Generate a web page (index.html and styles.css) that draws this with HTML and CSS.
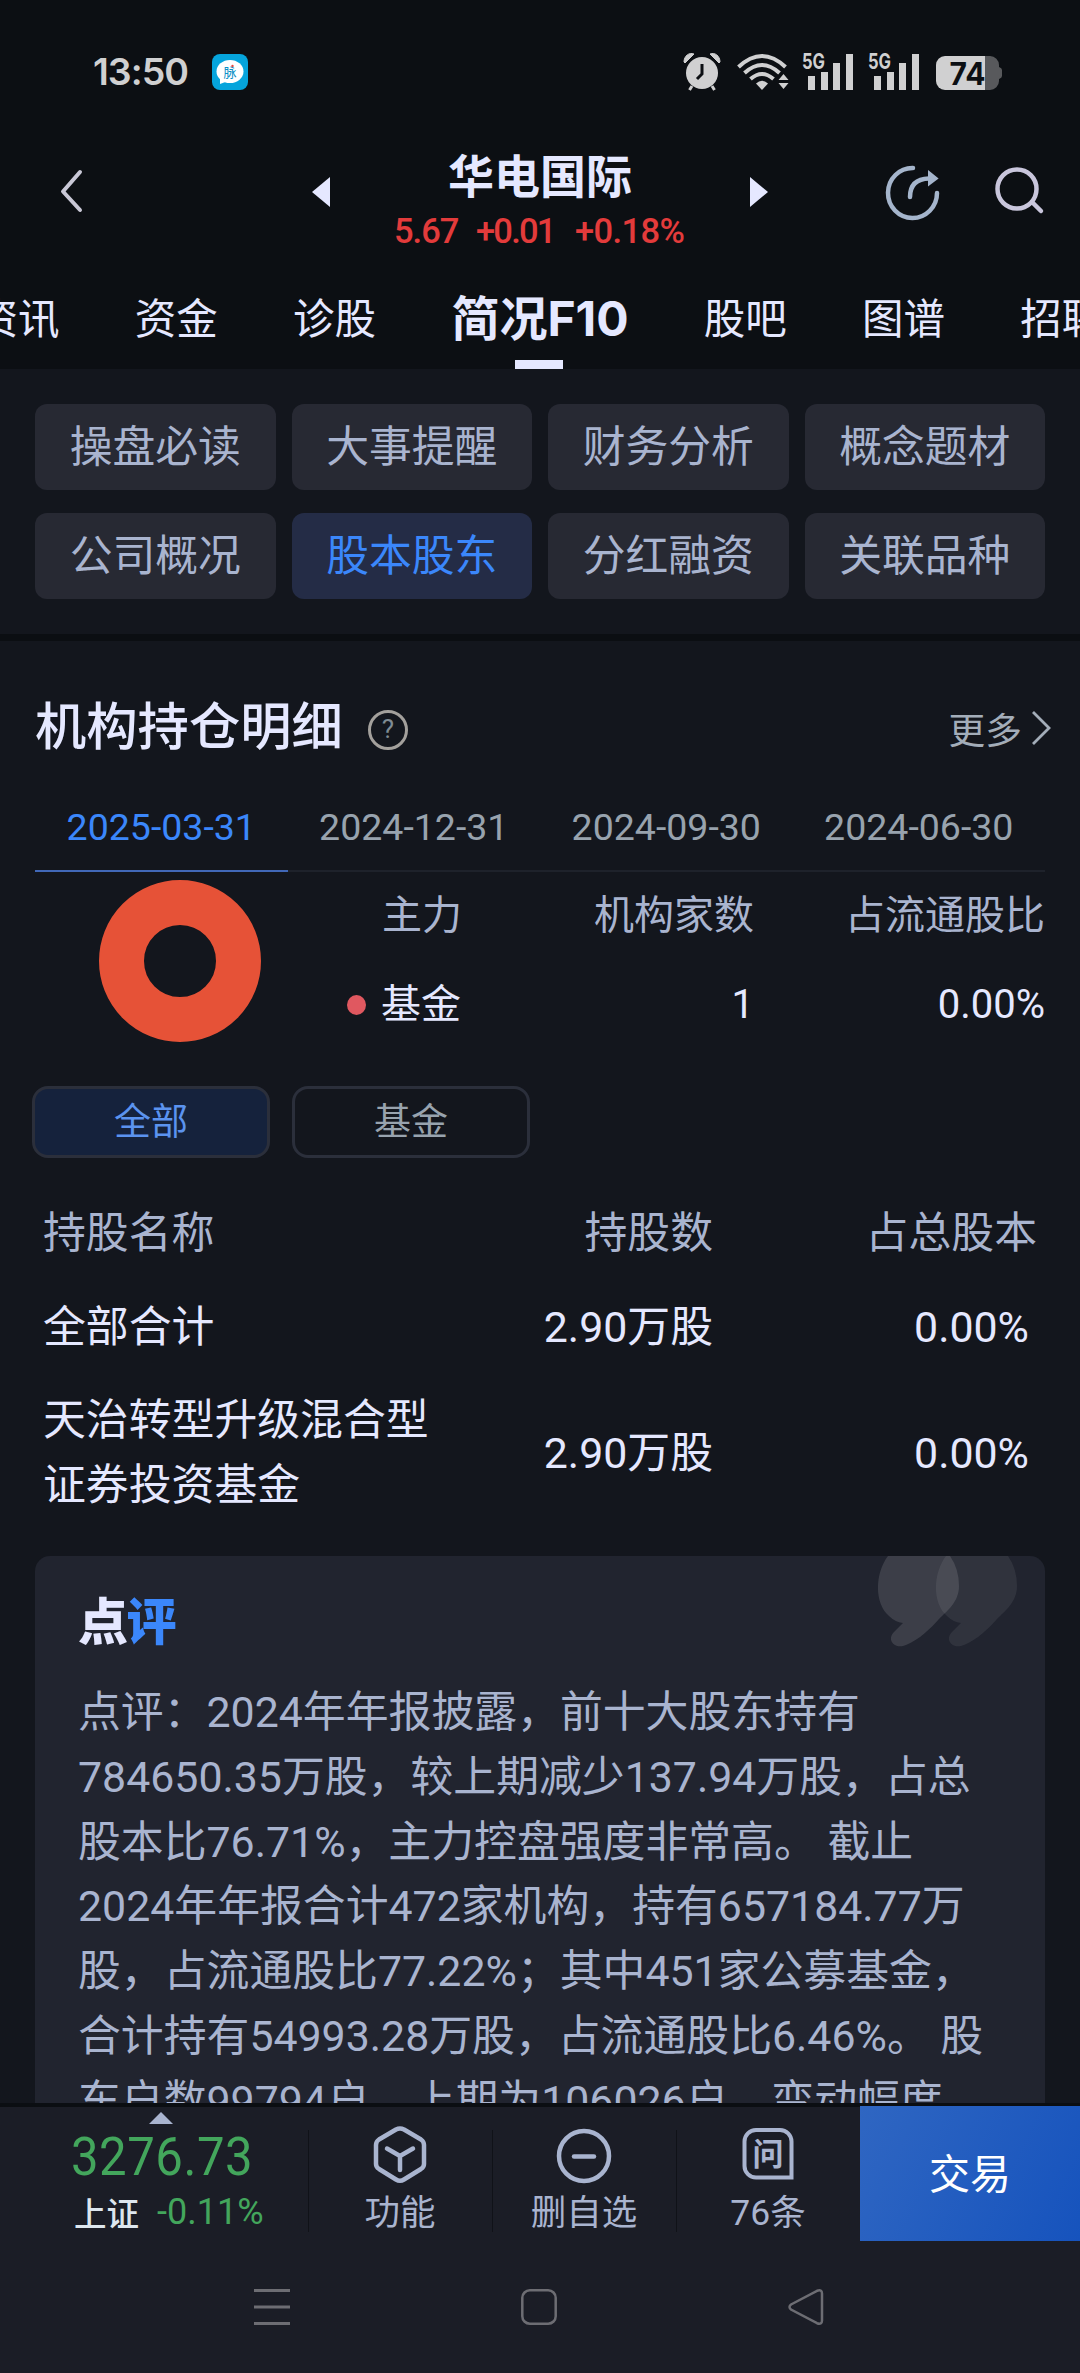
FILE: index.html
```html
<!DOCTYPE html>
<html lang="zh-CN">
<head>
<meta charset="utf-8">
<title>华电国际 - 简况F10</title>
<link rel="stylesheet" href="styles.css">
</head>
<body>
<header class="top">
  <div class="status">
    <span class="time">13:50</span>
    <svg class="app" width="36" height="36" viewBox="0 0 36 36"><rect width="36" height="36" rx="8" fill="#05a4dc"/><ellipse cx="18" cy="17.500" rx="13.500" ry="11.500" fill="#fff"/><path d="M8 24v6l8-3z" fill="#fff"/><text x="11.500" y="22.500" font-size="13" fill="#0a8fc6" class="cjk">脉</text><circle cx="20.500" cy="12" r="1.200" fill="#e5483f"/></svg>
    <div class="signals">
      <svg width="38" height="40" viewBox="0 0 38 40" fill="#d0d0d1"><circle cx="19" cy="21" r="16"/><path d="M1 10C1 4 6 0 11 2L2 11zM37 10C37 4 32 0 27 2l9 9z" stroke="#d0d0d1" stroke-width="1"/><path d="M9 34l-2.500 4M29 34l2.500 4" stroke="#d0d0d1" stroke-width="3"/><path d="M19 12v10l-5 5" fill="none" stroke="#0c0f13" stroke-width="3"/></svg>
      <svg class="wifi" width="52" height="38" viewBox="0 0 52 38" fill="none" stroke="#d0d0d1" stroke-width="4"><path d="M1.500 14Q25 -8 48.500 14M7.500 20Q25 4 42.500 20M13.500 26Q25 16 36.500 26"/><path d="M19 30.500Q25 25 31 30.500L25 37z" fill="#d0d0d1" stroke="none"/><path d="M46.500 21l5 6h-10zM46.500 36l5-6h-10z" fill="#d0d0d1" stroke="none"/></svg>
      <svg class="cell" width="52" height="38" viewBox="0 0 52 38" fill="#d0d0d1"><text x="0" y="16" font-size="21.500" font-weight="700" textLength="23" lengthAdjust="spacingAndGlyphs" class="num">5G</text><path d="M6 23h7v14H6zM19 19h7v18h-7zM31 10h7v27h-7zM44 1h7v36h-7z"/></svg>
      <svg class="cell two" width="52" height="38" viewBox="0 0 52 38" fill="#d0d0d1"><text x="0" y="16" font-size="21.500" font-weight="700" textLength="23" lengthAdjust="spacingAndGlyphs" class="num">5G</text><path d="M6 23h7v14H6zM19 19h7v18h-7zM31 10h7v27h-7zM44 1h7v36h-7z"/></svg>
      <svg class="bat" width="67" height="34" viewBox="0 0 67 34"><path d="M9 0h40v34H9a9 9 0 0 1-9-9V9a9 9 0 0 1 9-9z" fill="#d0d0d1"/><path d="M49 0h5a9 9 0 0 1 9 9v2q3 1 3 3v6q0 2-3 3v2a9 9 0 0 1-9 9h-5z" fill="#58595c"/><text x="13.500" y="28.500" font-size="31" font-weight="700" textLength="36" lengthAdjust="spacingAndGlyphs" fill="#0c0f13" class="num">74</text></svg>
    </div>
  </div>
  <div class="bar">
    <svg class="back" width="24" height="46" viewBox="0 0 24 46"><path d="M21 4L4 23.500 21 42" fill="none" stroke="#c9c8d6" stroke-width="4" stroke-linecap="round" stroke-linejoin="round"/></svg>
    <svg class="prev" width="18" height="30" viewBox="0 0 18 30"><path d="M18 0v30L0 15z" fill="#e5e8ff"/></svg>
    <div class="stock">
      <h1>华电国际</h1>
      <div class="quote"><span class="q1">5.67</span><span class="q2">+0.01</span><span class="q3">+0.18%</span></div>
    </div>
    <svg class="next" width="18" height="30" viewBox="0 0 18 30"><path d="M0 0v30l18-15z" fill="#e5e8ff"/></svg>
    <svg class="share" width="56" height="58" viewBox="0 0 56 58" fill="none" stroke="#a5b5cc" stroke-width="4.500" stroke-linecap="round"><path d="M29 4A24.500 25 0 1 0 53 29"/><path d="M26 33Q26 15 45 14.500"/><path d="M45 8l8 6.500-8 6z" fill="#a5b5cc" stroke-width="2"/></svg>
    <svg class="search" width="50" height="48" viewBox="0 0 50 48" fill="none" stroke="#c9c6dc" stroke-width="4.500" stroke-linecap="round"><circle cx="22" cy="22" r="19.500"/><path d="M37 35l9 9"/></svg>
  </div>
  <nav class="tabs"><span>资讯</span><span>资金</span><span>诊股</span><b>简况F10</b><span>股吧</span><span>图谱</span><span>招聘</span></nav>
</header>
<main>
  <section class="menu">
    <a>操盘必读</a><a>大事提醒</a><a>财务分析</a><a>概念题材</a>
    <a>公司概况</a><a class="on">股本股东</a><a>分红融资</a><a>关联品种</a>
  </section>
  <section class="holding">
    <div class="head">
      <h2>机构持仓明细</h2><span class="help">?</span>
      <span class="more">更多</span><svg width="19" height="36" viewBox="0 0 19 36"><path d="M1 2l16 16L1 34" fill="none" stroke="#a3adb9" stroke-width="2.800"/></svg>
    </div>
    <div class="dates"><span class="on">2025-03-31</span><span>2024-12-31</span><span>2024-09-30</span><span>2024-06-30</span></div>
    <div class="summary">
      <svg class="donut" width="162" height="162" viewBox="0 0 162 162"><circle cx="81" cy="81" r="58.500" fill="none" stroke="#e65237" stroke-width="45"/></svg>
      <div class="sum-grid">
        <span class="th">主力</span><span class="th r">机构家数</span><span class="th r">占流通股比</span>
        <span class="dot">基金</span><span class="r">1</span><span class="r">0.00%</span>
      </div>
    </div>
    <div class="pills"><span class="on">全部</span><span>基金</span></div>
    <div class="table">
      <div class="row th"><span>持股名称</span><span>持股数</span><span>占总股本</span></div>
      <div class="row"><span>全部合计</span><span>2.90万股</span><span class="pc">0.00%</span></div>
      <div class="row tall"><span>天治转型升级混合型<br>证券投资基金</span><span>2.90万股</span><span class="pc">0.00%</span></div>
    </div>
    <article class="card">
      <svg class="marks" width="140" height="92" viewBox="0 0 140 92"><path d="M11 0C-2 17 -3 47 12 60Q18 66 26 67L17 76C9 84 18 94 29 89C42 84 54 72 62 63C70 55 82 46 82 30Q82 13 73 0z" fill="#fff" fill-opacity=".12"/><path d="M69 0C56 17 55 47 70 60Q76 66 84 67L75 76C67 84 76 94 87 89C100 84 112 72 120 63C128 55 140 46 140 30Q140 13 131 0z" fill="#fff" fill-opacity=".07"/></svg>
      <h3>点<i>评</i></h3>
      <p>点评：2024年年报披露，前十大股东持有<br>784650.35万股，较上期减少137.94万股，占总<br>股本比76.71%，主力控盘强度非常高。 截止<br>2024年年报合计472家机构，持有657184.77万<br>股，占流通股比77.22%；其中451家公募基金，<br>合计持有54993.28万股，占流通股比6.46%。 股<br>东户数99794户，上期为106026户，变动幅度</p>
    </article>
  </section>
</main>
<footer>
  <div class="dock">
    <div class="index">
      <svg width="24" height="12" viewBox="0 0 24 12"><path d="M12 0l12 12H0z" fill="#a9b4cf"/></svg>
      <div class="pt"><span>3276.73</span></div>
      <div class="chg"><b>上证</b><span>-0.11%</span></div>
    </div>
    <div class="act"><svg width="56" height="60" viewBox="0 0 56 60" fill="none" stroke="#a9b4cf" stroke-width="4.500" stroke-linecap="round" stroke-linejoin="round"><path d="M24 4.500Q28 2.500 32 4.500L49 14.500Q52 16.500 52 20V39Q52 42 49 44L32 54.500Q28 57 24 54.500L7 44Q4 42 4 39V20Q4 16.500 7 14.500z"/><path d="M15 23.500l13 7.500 13-7.500M28 31v14"/></svg><span>功能</span></div>
    <div class="act"><svg width="56" height="60" viewBox="0 0 56 60" fill="none" stroke="#a9b4cf" stroke-width="4.500" stroke-linecap="round"><circle cx="28" cy="31" r="25"/><path d="M18 31.500h20"/></svg><span>删自选</span></div>
    <div class="act"><svg width="56" height="60" viewBox="0 0 56 60"><path d="M16 5h24a11.500 11.500 0 0 1 11.500 11.500v36H16A11.500 11.500 0 0 1 4.500 41V16.500A11.500 11.500 0 0 1 16 5z" fill="none" stroke="#a9b4cf" stroke-width="4"/><text x="28" y="40" font-size="31" font-weight="700" text-anchor="middle" fill="#a9b4cf" class="cjk">问</text></svg><span>76条</span></div>
    <div class="trade">交易</div>
  </div>
  <div class="sysnav">
    <svg width="36" height="36" viewBox="0 0 36 36"><path d="M0 1.500h36M0 18h36M0 34.500h36" stroke="#6d6d73" stroke-width="3"/></svg>
    <svg width="36" height="36" viewBox="0 0 36 36"><rect x="1.300" y="1.300" width="33.400" height="33.400" rx="7.500" fill="none" stroke="#6d6d73" stroke-width="2.500"/></svg>
    <svg width="36" height="36" viewBox="0 0 36 36"><path d="M3 15.500L29 1.800Q34 0 34 4.500V31.500Q34 36 29 34.200L3 20.500Q0 18 3 15.500z" fill="none" stroke="#6d6d73" stroke-width="2.500"/></svg>
  </div>
</footer>
</body>
</html>
```
FILE: styles.css
```css
* { box-sizing: border-box; margin: 0; padding: 0; }
body {
  width: 1080px; height: 2373px; overflow: hidden;
  display: flex; flex-direction: column;
  background: #13161d; color: #e5e8ff;
  font-family: Roboto, "Noto Sans CJK SC", sans-serif;
}
svg { display: block; flex: none; overflow: visible; }
.cjk { font-family: "Noto Sans CJK SC", sans-serif; }
.num { font-family: Inter, sans-serif; }

.top { height: 369px; background: #0c0f13; flex: none; }
.status { height: 144px; padding: 0 77px 0 93px; display: flex; align-items: center; }
.time { width: 119px; font: 600 37.500px/40px Inter, sans-serif; color: #d0d0d1; letter-spacing: -1px; }
.signals { margin-left: auto; display: flex; align-items: center; }
.wifi { margin-left: 16px; }
.cell { margin-left: 13px; }
.cell.two { margin-left: 14px; }
.bat { margin: 2px 0 0 16px; }

.bar { height: 122px; display: flex; align-items: flex-start; padding-left: 59px; }
.back { margin-top: 24px; }
.prev { margin: 33px 0 0 229px; }
.stock { width: 420px; text-align: center; }
.next { margin-top: 33px; }
.stock h1 { font-size: 46px; line-height: 60px; font-weight: 700; margin-top: 3px; }
.quote { height: 40px; margin-top: 4px; padding-left: 64px; display: flex; font-size: 34.500px; line-height: 40px; font-weight: 500; color: #e33b3b; }
.quote span { white-space: nowrap; }
.q1 { width: 82px; text-align: left; letter-spacing: -1px; }
.q2 { width: 99px; text-align: left; letter-spacing: -1.800px; }
.q3 { letter-spacing: -.6px; }
.share { margin: 20px 0 0 116px; }
.search { margin: 23px 0 0 55px; }

.tabs { height: 103px; overflow: hidden; display: flex; gap: 75.300px; }
.tabs span, .tabs b { flex: none; white-space: nowrap; width: 83px; font-size: 41.500px; line-height: 107px; }
.tabs span:first-child { margin-left: -23.500px; }
.tabs b { width: 177px; font: 700 48px/106px Inter, "Noto Sans CJK SC", sans-serif; background: linear-gradient(#e5e8ff, #e5e8ff) 64px 94px / 48px 9px no-repeat; }

main { height: 1734px; overflow: hidden; flex: none; }
.menu { height: 272px; padding: 35px 35px 0; display: grid; grid-template-columns: repeat(4, 1fr); grid-auto-rows: 86px; gap: 23px 16px; border-bottom: 7px solid #0b0e12; }
.menu a { border-radius: 12px; background: #272933; color: #a9b4cf; font-size: 42.800px; line-height: 86px; text-align: center; }
.menu .on { background: #242c46; color: #3b87fb; }
.holding { padding: 0 35px; }
.head { height: 142px; padding-top: 32px; margin-right: -6px; display: flex; align-items: center; }
.head h2 { font-size: 51.300px; line-height: 76px; font-weight: 500; width: 333px; }
.help { width: 40px; height: 40px; margin-top: 3px; border: 3px solid #a3a09c; border-radius: 50%; color: #7f8b93; font-size: 26px; line-height: 33px; text-align: center; }
.more { margin-left: auto; margin-right: 10px; color: #a3adb9; font-size: 36.700px; }
.dates { height: 89px; display: flex; border-bottom: 2px solid #1e222b; }
.dates span { flex: 1; height: 89px; font-size: 37.500px; line-height: 89px; text-align: center; color: #98a3ae; }
.dates .on { color: #3b87fb; border-bottom: 2px solid #4168b8; }
.summary { height: 214px; padding: 8px 0 0 64px; display: flex; }
.donut { margin-right: 51px; }
.sum-grid { flex: 1; display: grid; grid-template-columns: 79px 293px 291px; grid-template-rows: 89px 89px; font-size: 40px; line-height: 72px; padding-left: 70px; }
.sum-grid span { white-space: nowrap; }
.th { color: #a9b4cf; }
.r { text-align: right; }
.dot { display: flex; margin-left: -35px; }
.dot::before { content: ""; width: 20px; height: 20px; margin: 26px 15px 0 0; border-radius: 50%; background: #e05860; }
.pills { display: flex; gap: 22px; margin: 0 0 0 -3px; }
.pills span { width: 238px; height: 72px; border: 3px solid #2b2f3b; border-radius: 16px; font-size: 37px; line-height: 67px; text-align: center; color: #98a3ae; }
.pills .on { background: #15223c; color: #5b93ef; }
.table { padding: 28px 8px 0 8px; font-size: 42.850px; line-height: 64.800px; height: 398px; }
.row { height: 94px; display: grid; grid-template-columns: 441px 229px 1fr; align-items: center; }
.row.tall { height: 158px; }
.row span + span { text-align: right; }
.row .pc { padding-right: 8px; }
.card { position: relative; height: 620px; border-radius: 15px; background: #21242f; padding: 34px 43px; }
.marks { position: absolute; right: 28px; top: 0; }
.card h3 { font-size: 50px; line-height: 66px; font-weight: 900; letter-spacing: -1.500px; }
.card h3 i { font-style: normal; color: #3b87fb; }
.card p { color: #a9b4cf; font-size: 42.850px; line-height: 64.800px; margin-top: 24px; white-space: nowrap; }

footer { height: 270px; background: #1b1d26; border-top: 4px solid #0b0e12; flex: none; }
.dock { height: 134px; display: flex; }
.index { width: 308px; padding: 5px 0 0 71px; }
.index svg { margin-left: 78px; }
.pt { height: 62px; font-size: 54.500px; line-height: 64px; color: #43a65c; }
.pt span { display: inline-block; transform: scaleX(.9); transform-origin: 0 0; letter-spacing: .6px; }
.chg { display: flex; font-size: 36px; line-height: 47px; color: #43a65c; margin: 3px 0 0 3px; }
.chg b { width: 83px; font-size: 32.500px; line-height: 52px; font-weight: 500; color: #dde6ee; }
.act { width: 184px; display: flex; flex-direction: column; align-items: center; color: #a9b4cf; font-size: 35.500px; line-height: 46px; padding-top: 18px; background: linear-gradient(#101218, #101218) 0 23px / 1px 102px no-repeat; }
.act span { margin-top: 5px; }
.trade { flex: 1; height: 135px; margin-top: -1px; background: linear-gradient(115deg, #2f66c2, #1653bd); color: #fff; font-size: 41px; line-height: 139px; text-align: center; }
.sysnav { display: flex; justify-content: space-between; padding: 48px 256px 0 254px; }
```
